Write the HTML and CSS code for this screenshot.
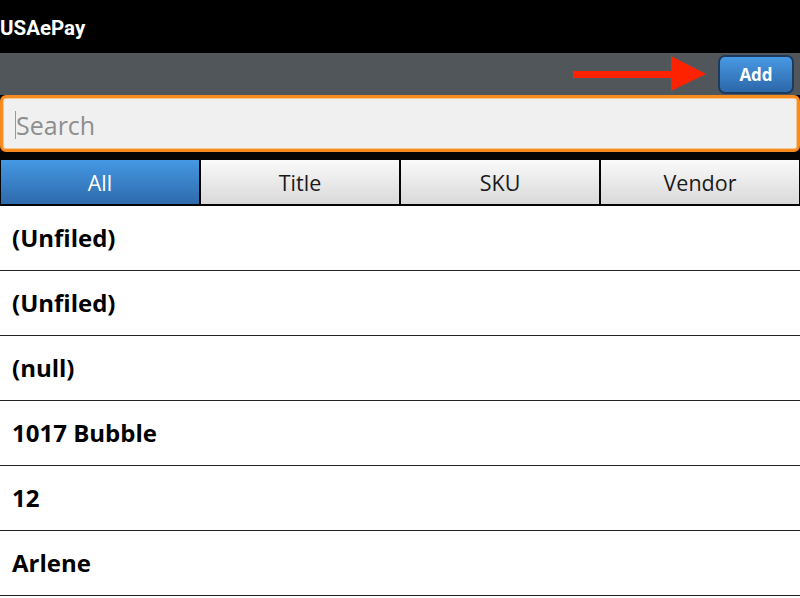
FILE: index.html
```html
<!DOCTYPE html>
<html>
<head>
<meta charset="utf-8">
<link rel="stylesheet" href="styles.css">
</head>
<body>
<div class="app">
  <header class="titlebar"><span class="title">USAePay</span></header>
  <div class="actionbar">
    <svg class="arrow" width="134" height="36" viewBox="0 0 134 36">
      <rect x="0" y="15" width="100" height="7" fill="#ff2200"/>
      <polygon points="98,0 133,18 98,35" fill="#ff2200"/>
    </svg>
    <button class="add-btn">Add</button>
  </div>
  <div class="search-wrap">
    <div class="search"><span class="caret"></span><span class="placeholder">Search</span></div>
  </div>
  <nav class="tabs">
    <div class="tab active">All</div>
    <div class="tab">Title</div>
    <div class="tab">SKU</div>
    <div class="tab">Vendor</div>
  </nav>
  <ul class="list">
    <li class="row">(Unfiled)</li>
    <li class="row">(Unfiled)</li>
    <li class="row">(null)</li>
    <li class="row">1017 Bubble</li>
    <li class="row">12</li>
    <li class="row">Arlene</li>
  </ul>
</div>
</body>
</html>
```
FILE: styles.css
```css
* { box-sizing: border-box; }
html, body { margin: 0; padding: 0; }
body { width: 800px; height: 598px; overflow: hidden; background: #fff; font-family: "Open Sans", "Noto Sans", sans-serif; }
.app { display: flex; flex-direction: column; }
.titlebar { height: 53px; background: #000; display: flex; align-items: center; padding-top: 2px; }
.title { color: #fff; font-family: Roboto, sans-serif; font-weight: 700; font-size: 20.5px; }
.actionbar { height: 42px; background: #51565a; display: flex; align-items: center; justify-content: flex-end; padding-right: 6px; gap: 11px; }
.arrow { display: block; }
.add-btn { width: 76px; height: 39px; border: 2px solid #1d3a5c; border-radius: 7px; background: linear-gradient(#4899e4, #2c67a9); color: #fff; font-family: "Open Sans", sans-serif; font-weight: 700; font-size: 17px; padding: 0; margin-top: 1px; }
.search-wrap { background: #050505; padding: 0 0 8px 0; }
.search { height: 57px; border: 3px solid #f68b1f; border-radius: 6px; background: #f0f0f0; box-shadow: inset 0 0 0 1px #f7c98f; display: flex; align-items: center; padding-left: 12px; padding-top: 3px; }
.caret { width: 1px; height: 28px; background: #999; margin-right: 0; }
.placeholder { color: #8e8e8e; font-family: "Open Sans", sans-serif; font-size: 25px; }
.tabs { background: #050505; display: grid; grid-template-columns: repeat(4, 1fr); gap: 2px; padding: 0 1px 2px 1px; }
.tab { height: 44px; display: flex; align-items: center; justify-content: center; background: linear-gradient(#fafafa, #d9d9d9); color: #1a1a1a; font-family: "Open Sans", sans-serif; font-size: 21.5px; padding-top: 1px; }
.tab.active { background: linear-gradient(#4598e4, #2e6aab); color: #fff; }
.list { list-style: none; margin: 0; padding: 0; }
.row { height: 65px; border-bottom: 1px solid #222; display: flex; align-items: center; padding-left: 12px; font-weight: 700; font-size: 24px; color: #000; padding-bottom: 2px; }
```
